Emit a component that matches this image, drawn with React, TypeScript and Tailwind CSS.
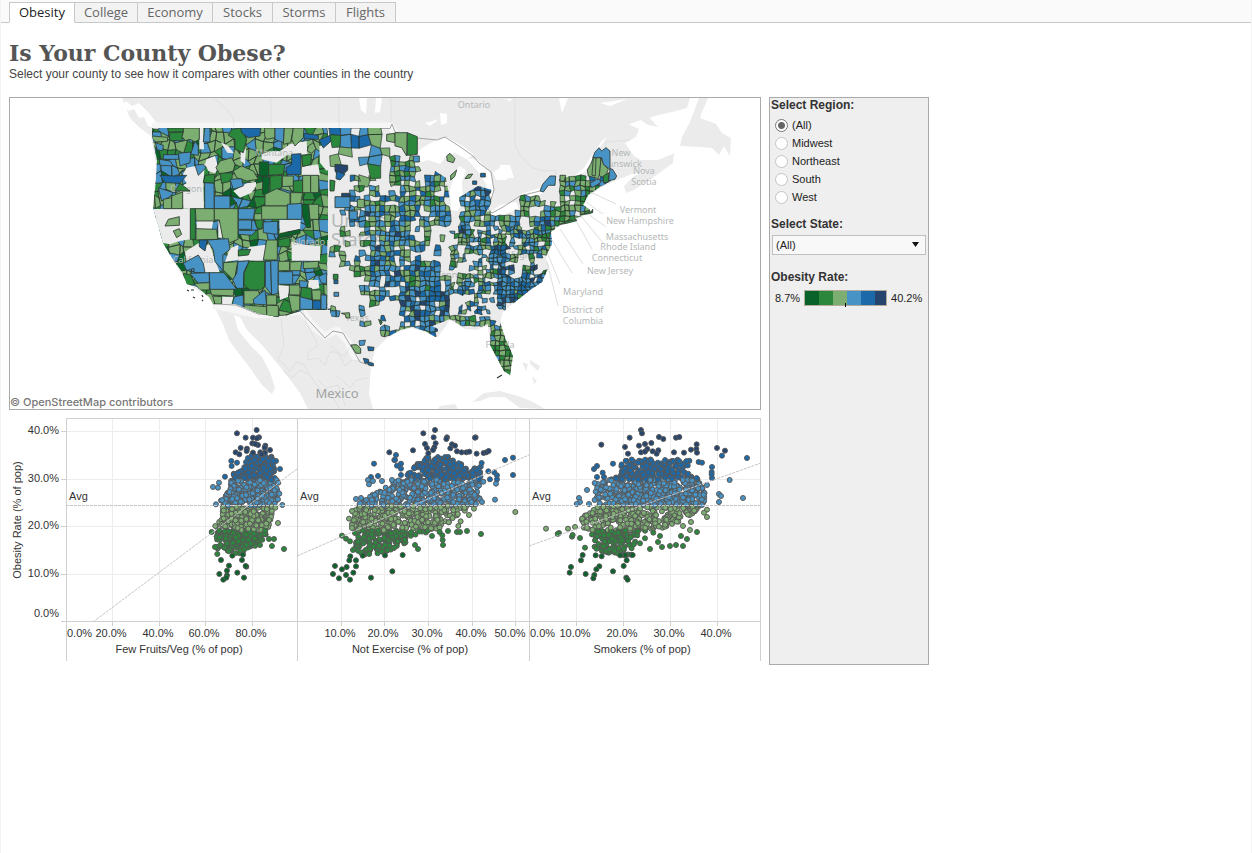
import React, { useState } from "react";

type Tone = "X" | "D" | "G" | "B" | "M" | "N" | "W";

const TONES: Record<Tone, string> = {
  X: "#09622a",
  D: "#2a873b",
  G: "#7bae70",
  B: "#4893c5",
  M: "#1c69a9",
  N: "#26456e",
  W: "#ebebeb",
};

const TABS = [
  { name: "Obesity", width: "w-[66px]" },
  { name: "College", width: "w-[64px]" },
  { name: "Economy", width: "w-[76px]" },
  { name: "Stocks", width: "w-[61px]" },
  { name: "Storms", width: "w-[64px]" },
  { name: "Flights", width: "w-[61px]" },
];

const REGIONS = ["(All)", "Midwest", "Northeast", "South", "West"];

/* ---------- deterministic noise ---------- */

function noise(a: number, b: number, c: number) {
  let h = (a * 374761393 + b * 668265263 + c * 2147483647) | 0;
  h = Math.imul(h ^ (h >>> 13), 1274126177);
  h = Math.imul(h ^ (h >>> 15), 2246822519);
  return ((h ^ (h >>> 16)) >>> 0) / 4294967296;
}

/* ---------- county mosaic ---------- */

const EAST_ROWS = [
  "ddddd",
  "ddddd",
  "dd.dddm",
  "d..dd.Gmg.b",
  "...dd.GMm.bb",
  "..mdmsGMMMMm...........GGGBB",
  "..mmM.mMMMMM.BBB.......GGGG",
  "..mmMMMMMMMM.BBB...GGgmGGG",
  ".bmBMMMMMmMM.MBB..mG.BGGGG",
  ".dBMMMMMmBmBmMbMmgBmMBMGGg",
  ".g.mMMBMbg.gMBmmsmBBMMG",
  ".g.gmMBBMm.gMMmMmmBBMGBB",
  "gm.mBMBMsmb.MMMMNNmmmMb",
  ".gbmBMmMmmmsMMmmBBMmmms",
  "..mGBBBMBBB.mmmmMBBMBmb",
  "...mBBBMMBBMmMmMMBBBBNmg",
  "...mmmbBBMNBmBmMmBBNBBb",
  ".b..GmbBBNNBsmmmbBNGB",
  "b..s...BBbNBsbbbsbB",
  "...m.b.bBBBBgGGgbbBb",
  "...b.GbMBBNb...gGG",
  "...b....BB......GGG",
  "................GGG",
  "................GGG",
  "................GGG",
];

const MIX: Record<string, [number, string]> = {
  d: [0.72, "BBBBGGGDM"],
  m: [0.48, "BBBGGGDM"],
  M: [0.87, "BBBGGGDMMBG"],
  b: [0.48, "BBBMMG"],
  B: [0.92, "BBBBMMMGBN"],
  N: [0.95, "MMMNBB"],
  g: [0.5, "GGGDB"],
  G: [0.95, "GGGGDDB"],
  s: [0.2, "BG"],
};

type Layers = Record<string, string>;

function addCell(out: Layers, tone: string, i: number, j: number, s: number, seed: number, wobble: number) {
  const at = (a: number, b: number) =>
    `${(a * s + (noise(a, b, seed) - 0.5) * wobble).toFixed(1)} ${(b * s + (noise(a, b, seed + 1) - 0.5) * wobble).toFixed(1)}`;
  out[tone] = (out[tone] ?? "") + `M${at(i, j)}L${at(i + 1, j)}L${at(i + 1, j + 1)}L${at(i, j + 1)}Z`;
}

const isSmallCountyArea = (x: number, y: number) => x >= 120 && y >= 100 && y < 190;

function eastCounties(): Layers {
  const out: Layers = {};
  EAST_ROWS.forEach((row, r) => {
    [...row].forEach((ch, c) => {
      if (ch === "." || isSmallCountyArea(c * 10, r * 10)) return;
      const [fill, tones] = MIX[ch];
      const n = ch === "d" ? 1 : 2;
      const s = 10 / n;
      for (let a = 0; a < n; a++)
        for (let b = 0; b < n; b++) {
          const i = c * n + a;
          const j = r * n + b;
          if (noise(i, j, 5) > fill) continue;
          addCell(out, tones[Math.floor(noise(i, j, 9) * tones.length)], i, j, s, 31, s * 0.5);
        }
    });
  });
  return out;
}

function smallCounties(): Layers {
  const out: Layers = {};
  const s = 4;
  for (let i = 30; i < 66; i++)
    for (let j = 25; j < 48; j++) {
      const x = i * s + s / 2;
      const y = j * s + s / 2;
      const ch = EAST_ROWS[Math.floor(y / 10)]?.[Math.floor(x / 10)] ?? ".";
      if (ch === "." || !isSmallCountyArea(x, y)) continue;
      const [fill, tones] = MIX[ch];
      const hole = noise(Math.floor(i / 2), Math.floor(j / 2), 41) < 0.12;
      if (hole || noise(i, j, 15) > fill) continue;
      addCell(out, tones[Math.floor(noise(i, j, 19) * tones.length)], i, j, s, 51, s * 0.7);
    }
  return out;
}

function westCounties(): Layers {
  const out: Layers = {};
  const tones = "GGGGGGDDDBBBX";
  for (let i = 0; i < 23; i++)
    for (let j = 0; j < 24; j++)
      addCell(out, tones[Math.floor(noise(i, j, 77) * tones.length)], i, j, 8, 12, 7);
  return out;
}

type Shape = [Tone, string];

const NORTHWEST: Shape[] = [
  ["W", "238,96 250,96 252,160 238,160"],
  ["W", "190,232 200,215 255,205 250,260 252,338 190,338 188,290 165,280 200,262 190,245"],
  ["W", "100,339 211,339 211,430 180,435 150,445 125,440 105,400"],
  ["W", "425,175 450,165 480,165 510,145 560,135 562,175 500,178 470,200 425,190"],
  ["W", "545,212 595,205 600,238 545,238"],
  ["W", "478,372 542,372 540,400 480,410"],
  ["W", "260,190 285,180 295,215 285,232 265,225 255,205"],
  ["W", "340,285 380,262 408,258 408,270 395,290 360,305"],
  ["W", "362,150 378,160 375,205 362,195"],
  ["W", "302,138 325,150 342,172 322,170"],
  ["W", "598,150 640,140 650,200 620,225 600,200"],
  ["G", "145,370 178,362 178,388 135,390"],
  ["G", "160,405 178,398 185,415 170,425"],
  ["D", "143,96 190,96 190,108 145,108"],
  ["D", "148,110 190,108 186,124 190,134 150,134"],
  ["G", "190,96 238,96 238,130 225,138 210,130 196,134 186,122 190,108"],
  ["G", "97,120 143,124 142,136 108,138 98,130"],
  ["B", "106,140 130,148 128,164 112,162"],
  ["B", "175,172 212,168 210,200 180,210"],
  ["B", "225,135 235,150 235,178 212,175"],
  ["B", "130,176 176,176 176,190 130,190"],
  ["B", "118,190 150,195 160,210 120,208"],
  ["M", "120,238 165,240 200,238 180,262 135,260"],
  ["B", "225,207 250,205 258,215 235,238"],
  ["B", "254,96 270,96 270,138 250,138"],
  ["D", "165,285 180,262 210,285"],
  ["B", "115,275 160,290 150,302 125,315"],
  ["G", "130,310 155,305 155,338 130,338"],
  ["G", "155,300 188,288 188,338 155,338"],
  ["D", "335,100 362,96 380,130 370,170 345,160 345,130 325,118"],
  ["M", "362,96 422,96 420,120 385,125 365,110"],
  ["G", "434,96 465,96 465,125 440,130 434,120"],
  ["B", "465,96 493,96 490,140 465,130"],
  ["G", "493,96 520,96 512,140 490,145"],
  ["G", "520,96 552,96 550,125 525,150 515,130"],
  ["M", "552,112 595,118 595,130 552,128"],
  ["M", "597,132 645,112 645,125 610,156"],
  ["G", "565,150 580,140 588,158 575,172 562,165"],
  ["G", "300,195 335,185 345,205 340,225 300,235 288,215"],
  ["G", "340,225 365,210 400,225 415,250 380,255 350,245"],
  ["D", "300,232 338,230 335,255 305,262"],
  ["D", "255,238 285,235 282,262 250,260"],
  ["M", "515,175 543,173 543,236 500,235 498,215 515,205"],
  ["D", "545,178 575,175 572,205 548,212"],
  ["X", "418,198 446,198 446,240 418,240"],
  ["D", "446,205 495,205 490,235 446,238"],
  ["X", "428,240 450,245 445,295 428,295"],
  ["D", "450,240 487,238 485,275 450,290"],
  ["G", "487,240 520,240 520,270 487,272"],
  ["D", "520,255 548,252 548,290 520,288"],
  ["G", "548,238 572,238 572,290 548,290"],
  ["G", "572,238 596,238 596,290 572,290"],
  ["G", "435,295 470,278 510,292 510,330 435,330"],
  ["G", "512,290 548,290 542,325 512,325"],
  ["G", "425,330 502,330 502,370 425,370"],
  ["B", "502,325 548,322 545,370 502,370"],
  ["X", "545,325 566,325 572,395 560,395 548,360"],
  ["G", "566,325 596,325 596,370 570,370"],
  ["B", "330,250 365,248 370,270 340,280"],
  ["B", "254,260 282,262 283,338 254,338"],
  ["B", "283,300 330,300 330,338 283,338"],
  ["D", "211,338 226,338 226,430 211,430"],
  ["G", "226,338 283,338 283,375 228,375"],
  ["W", "230,375 280,375 275,400 230,398"],
  ["G", "228,398 290,400 293,430 228,432"],
  ["G", "283,338 354,338 354,430 330,440 308,425 298,372 283,372"],
  ["W", "295,372 303,390 308,425 295,425"],
  ["B", "355,338 405,338 400,370 355,370"],
  ["B", "355,372 395,372 395,400 355,400"],
  ["B", "355,403 410,403 395,418 355,415"],
  ["D", "405,372 430,372 425,400 410,395"],
  ["B", "430,378 473,376 473,415 430,410"],
  ["X", "475,415 540,400 540,412 480,425"],
];

const SOUTHWEST: Shape[] = [
  ["W", "195,35 235,10 270,15 285,60 300,98 255,98 240,50 200,65"],
  ["W", "330,25 355,15 355,60 315,65"],
  ["W", "390,20 470,10 430,62 355,62 355,50"],
  ["W", "515,5 560,15 600,18 600,62 515,62"],
  ["W", "565,120 595,120 598,145 565,150"],
  ["W", "475,135 508,138 505,170 480,180"],
  ["W", "305,170 340,170 335,192 305,192"],
  ["W", "622,0 640,0 640,270 622,270"],
  ["D", "355,30 392,28 385,45 355,48"],
  ["M", "238,0 262,0 255,33 238,20"],
  ["B", "262,0 325,-4 330,28 308,45 310,92 285,65 280,30"],
  ["B", "190,70 235,45 250,70 255,98 222,98 222,85 200,92"],
  ["B", "210,100 268,98 268,128 235,130"],
  ["B", "268,98 312,98 350,148 270,150"],
  ["D", "190,100 212,105 225,135 195,135"],
  ["G", "222,130 268,128 268,150 240,150"],
  ["G", "310,68 353,65 345,110 338,118 310,90"],
  ["B", "354,65 388,62 372,95 370,145 350,145 338,120 350,100"],
  ["D", "388,64 434,64 434,140 420,150 390,150 372,135 372,100"],
  ["B", "436,64 452,64 455,165 436,140"],
  ["B", "452,62 475,62 474,160 455,165"],
  ["G", "270,148 342,148 340,168 275,165"],
  ["G", "278,168 305,170 305,192 285,192"],
  ["B", "343,170 370,165 370,205 336,195"],
  ["G", "372,152 415,152 420,168 400,192 372,192"],
  ["B", "400,178 435,150 440,195 402,192"],
  ["G", "372,195 440,200 440,228 372,208"],
  ["G", "440,195 475,197 475,230 440,228"],
  ["G", "440,165 470,165 470,195 440,195"],
  ["G", "440,0 472,0 472,60 430,60"],
  ["D", "475,0 510,-8 510,20 475,20"],
  ["G", "475,64 510,64 508,92 475,92"],
  ["G", "510,66 545,64 542,92 510,92"],
  ["G", "550,66 596,64 594,84 550,86"],
  ["B", "475,95 518,95 518,133 475,133"],
  ["G", "508,135 540,135 540,165 508,165"],
  ["B", "538,122 565,124 560,143 540,142"],
  ["D", "545,142 575,145 575,178 540,175"],
  ["G", "505,165 540,168 540,210 515,215"],
  ["B", "540,170 578,180 578,208 540,208"],
  ["G", "575,150 603,150 603,180 578,180"],
  ["M", "578,182 603,182 603,208 578,208"],
  ["B", "603,165 620,165 620,208 603,208"],
  ["B", "596,110 620,98 620,130 605,130"],
  ["D", "640,103 654,103 654,118 640,118"],
  ["M", "642,120 654,120 654,131 642,131"],
  ["B", "642,157 656,157 656,169 642,169"],
  ["B", "625,207 638,207 638,218 625,218"],
];

const MIDWEST: Shape[] = [
  ["G", "170,115 195,112 195,140 170,135"],
  ["G", "195,110 232,110 230,180 215,155 195,150"],
  ["D", "232,110 262,122 262,175 232,178"],
  ["B", "250,180 268,180 268,198 250,198"],
  ["D", "0,252 15,255 12,285 0,285"],
  ["N", "15,205 53,208 53,222 40,235 25,240 15,225"],
  ["M", "20,225 45,235 30,252 18,248"],
  ["B", "15,302 60,302 60,335 15,335"],
  ["N", "35,292 60,292 60,302 35,302"],
  ["G", "82,310 103,310 103,335 82,335"],
  ["B", "58,345 82,345 82,370 58,370"],
  ["G", "350,180 360,172 375,188 370,200 352,195"],
  ["G", "362,238 380,222 374,242 362,252"],
  ["M", "452,232 466,232 466,243 452,243"],
  ["M", "428,255 440,255 440,265 428,265"],
  ["G", "405,248 414,236 428,234 420,246"],
];

const SOUTH: Shape[] = [
  ["G", "62,315 80,314 92,325 92,340 78,340"],
  ["M", "113,320 132,322 130,332 115,332"],
  ["M", "100,355 115,358 117,368 105,370"],
  ["M", "112,366 130,370 130,378 116,375"],
  ["G", "34,220 58,218 60,234 48,234 46,224"],
  ["D", "146,238 157,246 152,255"],
];

const NORTHEAST: Shape[] = [
  ["G", "262,222 272,205 280,185 303,185 300,230 295,248 265,240"],
  ["G", "303,185 312,205 325,220 315,245 298,240"],
  ["G", "280,185 288,185 286,240 276,238"],
  ["B", "297,155 305,165 318,155 330,165 330,220 310,205 305,185 278,185 285,168"],
  ["B", "330,218 338,220 350,240 345,250 326,254"],
  ["D", "310,240 326,230 325,258 310,260"],
  ["B", "270,262 290,250 302,252 300,262 275,275"],
  ["B", "120,285 128,265 150,240 167,240 165,268 145,268 130,288"],
  ["G", "180,238 197,238 193,255 180,255"],
  ["D", "240,355 262,352 275,346 278,340 278,350 262,354"],
  ["D", "180,385 200,376 228,370 230,374 200,382"],
];

const US =
  "152,135 157,160 156,180 153,208 158,225 163,243 172,258 182,272 187,284 197,287 209,297 213,304 236,304 258,313 277,317 285,316 303,310 330,310 335,338 345,342 352,355 360,363 373,368 375,350 386,338 400,330 412,327 425,331 437,338 438,329 432,326 450,319 465,328 476,329 488,324 490,345 497,358 504,371 510,375 513,356 505,338 500,322 503,312 515,302 530,290 542,282 549,266 545,258 552,244 551,232 560,225 577,218 592,211 583,205 588,195 600,187 616,178 611,168 608,149 598,147 590,160 587,172 575,175 547,182 540,192 521,195 500,210 486,212 491,204 492,190 478,186 455,200 452,212 446,178 418,160 417,138 392,128 152,128";

const isGap = ([tone]: Shape) => tone === "W";
const isCounty = ([tone]: Shape) => tone !== "W";

function MapShapes({ shapes, transform }: { shapes: Shape[]; transform: string }) {
  return (
    <g transform={transform} stroke="#2f3b33" strokeWidth="2.6" strokeLinejoin="round">
      {shapes.map(([tone, points], i) => (
        <polygon key={i} points={points} fill={TONES[tone]} stroke={tone === "W" ? "none" : undefined} />
      ))}
    </g>
  );
}

function MosaicLayer({ layers }: { layers: Layers }) {
  return (
    <g stroke="#26352c" strokeWidth="0.7" strokeLinejoin="round">
      {Object.entries(layers).map(([tone, d]) => (
        <path key={tone} d={d} fill={TONES[tone as Tone]} />
      ))}
    </g>
  );
}

const OUTER_PLACES: [string, number, number][] = [
  ["Ontario", 474, 108],
  ["New", 621, 156],
  ["Brunswick", 620, 167],
  ["Nova", 644, 174],
  ["Scotia", 644, 185],
  ["Vermont", 638, 213],
  ["New Hampshire", 640, 224],
  ["Massachusetts", 637, 240],
  ["Rhode Island", 628, 250],
  ["Connecticut", 617, 261],
  ["New Jersey", 610, 274],
  ["Maryland", 583, 295],
  ["District of", 583, 313],
  ["Columbia", 583, 324],
  ["Texas", 357, 321],
  ["Florida", 500, 348],
  ["Tennessee", 459, 278],
  ["Virginia", 524, 258],
];

const INNER_PLACES: [string, number, number][] = [
  ["Oregon", 186, 192],
  ["California", 193, 263],
  ["Colorado", 306, 245],
  ["Montana", 274, 156],
];

const EAST = eastCounties();
const SMALL = smallCounties();
const WEST = westCounties();

function PlaceNames({ places }: { places: [string, number, number][] }) {
  return (
    <g fill="#b4b8b8" fontSize="9" fontFamily="'Noto Sans', sans-serif" textAnchor="middle">
      {places.map(([name, x, y]) => (
        <text key={name} x={x} y={y}>
          {name}
        </text>
      ))}
    </g>
  );
}

function CountyMap() {
  return (
    <svg viewBox="10 98 750 311" className="block h-auto w-full" role="img" aria-label="Map of obesity rate by county">
      <defs>
        <clipPath id="us-outline">
          <polygon points={US} />
        </clipPath>
      </defs>
      <g fill="#ebebeb">
        <path d="M122 98L560 98L563 110L566 98L690 98L687 108L672 112L655 116L635 122L615 130L602 141L592 155L584 168L572 178L585 172L600 147L612 130L628 124L639 129L636 137L625 143L634 156L641 160L658 160L672 154L655 167L645 172L632 174L617 180L600 188L589 196L584 205L592 211L577 220L560 226L551 232L552 244L546 258L549 266L542 282L530 290L515 302L503 312L500 322L506 338L513 356L510 375L504 372L497 358L490 345L488 326L476 330L465 329L450 320L438 337L425 332L412 328L400 331L386 339L375 350L371 366L369 394L373 409L308 409L300 393L281 368L262 345L247 330L240 317L234 315L238 330L250 345L262 357L270 372L275 388L272 394L262 385L250 368L240 355L229 340L222 322L213 304L209 297L187 284L172 258L153 208L156 165L151 136L140 128L130 118Z" />
        <path d="M699 98L708 98L702 112L700 118L716 124L722 133L731 138L730 156L724 146L719 155L712 148L700 147L680 146L682 137L690 122Z" />
        <path d="M624 186L634 176L650 170L660 162L674 153L673 163L655 176L634 190L626 193Z" />
        <path d="M638 118L650 118L658 127L648 125Z" />
        <path d="M472 402L484 393L500 391L518 396L533 402L545 409L520 408L505 397L490 397L480 401Z" />
        <path d="M522 362L528 364L526 371ZM532 376L537 381L534 384ZM530 360L540 366L538 371L530 364ZM440 406L455 404L458 409L438 409Z" />
      </g>
      <g fill="#fff">
        <path d="M122 106L129 111L134 109L139 118L144 117L148 126L154 128L163 134L164 128L156 122L148 112L139 103L132 106L126 101Z" />
        <path d="M359 98L367 98L366 114L361 110ZM376 98L382 98L380 112L375 113ZM440 113L447 114L447 123L441 125ZM439 119L425 123L430 126Z" />
        <path d="M412 158L422 148L436 140L446 137L463 146L474 155L466 159L455 153L446 157L440 164L428 160L418 163Z" />
        <path d="M451 210L450 190L454 176L459 166L466 170L462 182L463 200L458 211Z" />
        <path d="M466 158L478 160L491 173L494 185L493 197L488 197L486 184L480 174L474 167Z" />
        <path d="M493 172L505 165L512 175L506 180L496 180ZM489 213L500 205L516 202L519 209L505 214L495 219Z" />
        <path d="M521 194L540 188L543 193L530 199L520 199ZM500 165L510 165L514 178L500 178Z" />
        <path d="M559 99L568 98L562 113ZM627 99L600 103L610 106ZM505 99L512 99L510 101Z" />
      </g>
      <g fill="none" stroke="#f6f6f6" strokeWidth="7" strokeLinejoin="round">
        <path d="M152 126L391 126L395 133M213 305L258 315L302 311L314 327L325 336L337 330L348 342L356 360" />
      </g>
      <g fill="none" stroke="#d9dbdb" strokeWidth="0.7">
        <path d="M213 98L226 108L233 118L234 127M271 98V127M339 98V127M391 98V123M515 98V145L521 157L533 168L545 171L556 170V175M606 152V142L630 140M155 208H270M319 194V310M327 247H400M330 207H380M345 240L400 242M400 210V290M281 318L284 345L278 360L286 366L290 372L296 362L303 364L310 375M303 310L306 322L318 345L308 352L308 360L318 358L325 365L330 352L335 352L344 356L350 348M330 345L338 352L345 366L352 360L360 362M335 375L342 380L350 388L356 380L368 378M318 380L326 388L338 385L342 396L345 405M283 370L292 378L300 370L310 375L316 384L325 395L334 399L340 409" />
      </g>
      <g fill="none" stroke="#d2d4d4" strokeWidth="0.8">
        <path d="M588 191L616 204M586 202L603 214M584 211L606 227M581 216L603 243M575 219L592 249M560 229L583 264M552 240L572 273M547 252L560 284M547 262L558 306" />
      </g>
      <g fill="none" stroke="#a3a6a6" strokeWidth="1">
        <path d="M318 128.500H390L392 124L395 132L417 138L437 140L445 137L462 148L473 156L479 163L491 172L494 190L488 209L492 213L503 207L520 196L540 191M160 128.500H318M213 304L236 305L258 314L278 316L300 311L312 324L325 338L333 331L343 333L352 348L360 362L372 366" />
      </g>
      <PlaceNames places={OUTER_PLACES} />
      <g fill="#b4b8b8" fontSize="18" fontFamily="'Noto Sans', sans-serif">
        <text x="331" y="227">United</text>
        <text x="331" y="246">States</text>
      </g>
      <g clipPath="url(#us-outline)">
        <svg x="149" y="128" width="179" height="189" viewBox="4 2 179 189">
          <MosaicLayer layers={WEST} />
        </svg>
        <MapShapes shapes={NORTHWEST.filter(isGap)} transform="translate(120 96) scale(0.3333)" />
        <MapShapes shapes={SOUTHWEST.filter(isGap)} transform="translate(120 240) scale(0.3333)" />
      </g>
      <PlaceNames places={INNER_PLACES} />
      <g clipPath="url(#us-outline)">
        <MapShapes shapes={NORTHWEST.filter(isCounty)} transform="translate(120 96) scale(0.3333)" />
        <MapShapes shapes={SOUTHWEST.filter(isCounty)} transform="translate(120 240) scale(0.3333)" />
        <g transform="translate(330 126)">
          <MosaicLayer layers={EAST} />
          <MosaicLayer layers={SMALL} />
        </g>
      </g>
      <MapShapes shapes={MIDWEST} transform="translate(330 96) scale(0.3333)" />
      <MapShapes shapes={SOUTH} transform="translate(330 240) scale(0.3333)" />
      <MapShapes shapes={NORTHEAST} transform="translate(500 96) scale(0.3333)" />
      <path d="M187 290L189 291M191 290L194 290M193 297L195 298M202 295L203 297M202 300L203 301M497 378L502 375" stroke="#26352c" strokeWidth="1.2" fill="none" />
      <text x="337" y="398" textAnchor="middle" fill="#a2a4a4" fontSize="13" fontFamily="'Noto Sans', sans-serif">
        Mexico
      </text>
      <text x="10" y="406" fill="#777" fontSize="11" fontWeight="500" fontFamily="Inter, 'Noto Sans', sans-serif">
        © OpenStreetMap contributors
      </text>
    </svg>
  );
}

/* ---------- scatter plots ---------- */

type Pt = [number, number];

interface Panel {
  label: string;
  left: number;
  origin: number;
  count: number;
  ticks: [string, number][];
  trend: [number, number, number, number];
  body: Pt[];
  extra: Pt[];
}

const PANELS: Panel[] = [
  {
    label: "Few Fruits/Veg (% of pop)",
    left: 66,
    origin: 0,
    count: 820,
    ticks: [["20.0%", 112], ["40.0%", 159], ["60.0%", 205], ["80.0%", 252]],
    trend: [93, 622, 297, 469],
    body: [[738,140],[765,132],[815,140],[825,160],[826,190],[832,230],[832,275],[822,295],[810,340],[800,370],[780,400],[755,420],[720,435],[690,425],[650,415],[650,385],[648,350],[668,320],[668,290],[655,275],[690,240],[690,210],[705,185],[730,180]],
    extra: [[711,70],[770,60],[737,83],[759,83],[777,82],[771,85],[757,100],[774,105],[766,102],[796,107],[794,113],[722,114],[741,116],[707,127],[718,133],[740,123],[759,128],[781,127],[795,128],[810,120],[785,133],[694,153],[711,158],[695,168],[675,200],[657,218],[639,231],[654,233],[828,153],[820,152],[840,177],[830,210],[835,218],[838,251],[834,268],[847,285],[826,293],[834,339],[635,366],[646,348],[822,387],[807,387],[816,408],[852,417],[780,405],[663,450],[652,432],[726,450],[697,437],[729,434],[687,467],[739,470],[737,468],[681,482],[658,492],[712,488],[681,496],[670,509],[679,503],[732,503],[645,411],[648,283]],
  },
  {
    label: "Not Exercise (% of pop)",
    left: 297,
    origin: 295,
    count: 980,
    ticks: [["10.0%", 341], ["20.0%", 384], ["30.0%", 428], ["40.0%", 472], ["50.0%", 511]],
    trend: [297, 556, 529, 455],
    body: [[350,175],[395,140],[460,140],[490,155],[530,180],[565,150],[555,190],[560,215],[545,240],[560,260],[545,280],[530,295],[500,315],[470,335],[430,355],[400,370],[350,375],[330,400],[290,420],[250,432],[200,435],[175,420],[185,390],[190,365],[170,350],[170,300],[195,280],[230,255],[262,240],[290,215],[330,205]],
    extra: [[385,70],[420,60],[416,82],[456,82],[454,87],[542,82],[540,83],[390,102],[422,100],[471,103],[480,107],[396,114],[418,112],[414,120],[354,121],[400,130],[283,127],[466,115],[486,124],[500,127],[514,127],[523,125],[545,131],[566,129],[574,127],[581,123],[303,135],[298,150],[300,150],[237,161],[306,167],[318,161],[318,176],[654,143],[630,150],[654,195],[318,195],[249,198],[228,201],[219,210],[234,213],[222,223],[261,213],[291,210],[580,184],[598,187],[606,196],[606,208],[585,208],[603,221],[565,215],[600,269],[183,267],[198,264],[195,280],[561,276],[543,282],[661,306],[537,296],[522,315],[171,303],[162,326],[171,345],[171,354],[490,348],[497,334],[486,366],[495,366],[516,363],[459,363],[434,366],[442,376],[443,390],[444,405],[558,372],[411,378],[369,417],[323,435],[360,405],[180,369],[141,377],[153,386],[165,394],[174,420],[183,451],[166,439],[163,451],[120,468],[141,478],[155,471],[183,469],[114,492],[132,505],[153,495],[175,488],[165,509],[228,503],[292,484],[270,436],[203,437]],
  },
  {
    label: "Smokers (% of pop)",
    left: 529,
    origin: 525,
    count: 980,
    ticks: [["10.0%", 576], ["20.0%", 623], ["30.0%", 670], ["40.0%", 717]],
    trend: [529, 546, 761, 463],
    body: [[285,148],[500,148],[500,190],[530,215],[540,250],[540,275],[515,300],[470,335],[400,360],[340,365],[330,410],[320,435],[290,438],[250,428],[205,418],[205,385],[195,360],[155,355],[175,320],[225,285],[210,260],[215,220],[270,205],[290,180]],
    extra: [[348,60],[351,70],[314,83],[402,81],[415,87],[453,83],[463,81],[229,104],[300,111],[342,107],[360,102],[379,99],[367,117],[348,127],[360,125],[383,124],[400,121],[395,131],[309,131],[447,127],[477,128],[498,119],[515,103],[514,117],[516,128],[576,114],[600,122],[591,137],[666,144],[264,161],[207,177],[216,168],[233,188],[216,201],[237,201],[209,219],[186,240],[162,264],[165,276],[155,282],[192,282],[209,270],[521,156],[531,158],[561,171],[560,186],[561,204],[560,193],[614,210],[582,252],[588,258],[582,276],[654,264],[546,225],[546,299],[546,321],[531,285],[537,308],[498,336],[474,348],[495,360],[516,366],[468,378],[486,387],[474,408],[453,405],[435,408],[411,411],[375,417],[405,378],[399,396],[360,385],[345,400],[385,368],[63,356],[102,369],[98,372],[129,356],[150,351],[141,380],[143,375],[165,384],[180,413],[173,435],[168,451],[212,436],[230,439],[323,435],[305,451],[296,468],[138,471],[134,488],[182,492],[223,469],[214,478],[208,495],[205,505],[264,484],[304,503],[308,509]],
  },
];

function inside([x, y]: Pt, poly: Pt[]) {
  let hit = false;
  for (let i = 0, j = poly.length - 1; i < poly.length; j = i++) {
    const [xi, yi] = poly[i];
    const [xj, yj] = poly[j];
    if (yi > y !== yj > y && x < ((xj - xi) * (y - yi)) / (yj - yi) + xi) hit = !hit;
  }
  return hit;
}

function toneFor(y: number): Tone {
  if (y < 134) return "N";
  if (y < 209) return "M";
  if (y < 287) return "B";
  if (y < 361) return "G";
  if (y < 434) return "D";
  return "X";
}

function scatter(panel: Panel, seed: number): Pt[] {
  const xs = panel.body.map((p) => p[0]);
  const x0 = Math.min(...xs);
  const x1 = Math.max(...xs);
  const pts: Pt[] = [];
  for (let i = 0; pts.length < panel.count && i < 9000; i++) {
    const p: Pt = [x0 + noise(i, 3, seed) * (x1 - x0), 132 + noise(i, 8, seed + 4) * 308];
    if (inside(p, panel.body)) pts.push(p);
  }
  return [...pts, ...panel.extra];
}

const CLOUDS = PANELS.map((p, i) => scatter(p, 100 + i * 17));

const Y_TICKS: [string, number, number][] = [
  ["40.0%", 431, 434],
  ["30.0%", 479, 482],
  ["20.0%", 526, 529],
  ["10.0%", 574, 577],
  ["0.0%", 622, 617],
];

function ScatterPlots() {
  return (
    <svg viewBox="9 418 752 243" className="mt-2 block h-auto w-full" role="img" aria-label="Obesity rate scatter plots">
      <g shapeRendering="crispEdges" fill="none">
        <g stroke="#ececec">
          {Y_TICKS.slice(0, 4).map(([t, y]) => (
            <path key={t} d={`M66 ${y + 0.5}H761`} />
          ))}
          {PANELS.flatMap((p) => p.ticks.map(([t, x]) => <path key={p.left + t} d={`M${(t === "50.0%" ? 515 : x) + 0.5} 419V622`} />))}
        </g>
        <g stroke="#d0d0d0">
          <path d="M66 418.500H761M61 621.500H761M66.500 418V661M297.500 418V661M529.500 418V661M760.500 418V661" />
          {Y_TICKS.slice(0, 4).map(([t, y]) => (
            <path key={t} d={`M61 ${y + 0.5}H66`} />
          ))}
          {PANELS.flatMap((p) => p.ticks.map(([t, x]) => <path key={p.left + t} d={`M${(t === "50.0%" ? 515 : x) + 0.5} 622V626`} />))}
        </g>
      </g>
      {CLOUDS.map((cloud, i) => (
        <g key={i} transform={`translate(${PANELS[i].origin} 410) scale(0.3333)`} stroke="#575757" strokeWidth="3">
          {cloud.map(([x, y], k) => (
            <circle key={k} cx={x.toFixed(1)} cy={y.toFixed(1)} r="7.5" fill={TONES[toneFor(y)]} />
          ))}
        </g>
      ))}
      <g fill="none" stroke="#c4c4c4">
        <path d="M66 505.500H761" strokeDasharray="3 1" />
        {PANELS.map((p) => (
          <path key={p.left} d={`M${p.trend[0]} ${p.trend[1]}L${p.trend[2]} ${p.trend[3]}`} strokeDasharray="3 1" />
        ))}
      </g>
      <g fill="#333" fontSize="11" fontFamily="'Liberation Sans', Arial, sans-serif">
        <g textAnchor="end">
          {Y_TICKS.map(([t, , y]) => (
            <text key={t} x="59" y={y}>
              {t}
            </text>
          ))}
        </g>
        <text x="67" y="637">0.0%</text>
        <text x="530" y="637">0.0%</text>
        {PANELS.map((p) => (
          <g key={p.left}>
            <text x={p.left + 3} y="500">
              Avg
            </text>
            <g textAnchor="middle">
              {p.ticks.map(([t, x]) => (
                <text key={t} x={x - 1} y="637">
                  {t}
                </text>
              ))}
              <text x={p.left + 113} y="653">
                {p.label}
              </text>
            </g>
          </g>
        ))}
        <text transform="translate(21 520) rotate(-90)" textAnchor="middle">
          Obesity Rate (% of pop)
        </text>
      </g>
    </svg>
  );
}

/* ---------- filters ---------- */

function Filters() {
  const [region, setRegion] = useState("(All)");
  return (
    <aside className="w-40 shrink-0 border border-[#aaa] bg-[#efefef] px-px text-[11px] text-[#222]">
      <fieldset>
        <legend className="text-xs leading-[14px] font-bold text-[#333]">Select Region:</legend>
        <div className="mt-1 flex flex-col">
          {REGIONS.map((name) => (
            <label key={name} className="flex h-[18px] items-center gap-1 pl-1">
              <input
                type="radio"
                name="region"
                checked={region === name}
                onChange={() => setRegion(name)}
                className="size-[13px] appearance-none rounded-full border border-[#c4c4c4] bg-white checked:border-[#777] checked:bg-[radial-gradient(circle,#666_0_3px,#fff_4px)]"
              />
              {name}
            </label>
          ))}
        </div>
      </fieldset>
      <label htmlFor="state" className="mt-[11px] block text-xs leading-[14px] font-bold text-[#333]">
        Select State:
      </label>
      <div className="relative mt-1 px-px">
        <select id="state" className="block h-5 w-full appearance-none border border-[#c0c0c0] bg-[#f8f8f8] pl-[3px] text-[11px]">
          <option>(All)</option>
        </select>
        <svg viewBox="0 0 7 5" className="pointer-events-none absolute top-[7px] right-2 h-[5px] w-[7px]" aria-hidden="true">
          <path d="M0 0H7L3.500 5Z" fill="#111" />
        </svg>
      </div>
      <h2 className="mt-[15px] text-xs leading-[14px] font-bold text-[#333]">Obesity Rate:</h2>
      <div className="mt-1.5 flex items-center gap-1 pl-1">
        <span>8.7%</span>
        <div className="relative flex h-4 w-[83px] border border-[#b5ab9c]">
          <span className="flex-1 bg-[#09622a]" />
          <span className="flex-1 bg-[#2a873b]" />
          <span className="flex-1 bg-[#7bae70]" />
          <span className="flex-1 bg-[#4893c5]" />
          <span className="flex-1 bg-[#1c69a9]" />
          <span className="w-[11px] bg-[#26456e]" />
          <span className="absolute -bottom-0.5 left-10 h-1 w-px bg-black" />
        </div>
        <span>40.2%</span>
      </div>
    </aside>
  );
}

export default function App() {
  const [tab, setTab] = useState("Obesity");
  return (
    <div className="min-h-screen border-x border-[#f3f3f3] bg-white font-['Liberation_Sans',Arial,sans-serif]">
      <nav className="flex items-end border-b border-[#c8c8c8] bg-[#fafafa] pt-0.5 pl-2">
        {TABS.map(({ name, width }) => (
          <button
            key={name}
            type="button"
            onClick={() => setTab(name)}
            className={`-mr-px -mb-px h-[21px] border border-[#c8c8c8] text-center font-['Open_Sans','Noto_Sans',sans-serif] text-[13px] leading-[19px] ${width} ${
              tab === name ? "relative border-b-white bg-white text-[#222]" : "bg-[#f3f3f3] text-[#666]"
            }`}
          >
            {name}
          </button>
        ))}
      </nav>
      <main className="px-2 pt-4">
        <h1 className="pt-px font-['DejaVu_Serif','Liberation_Serif',serif] text-[22px] leading-[27px] font-bold text-[#555]">Is Your County Obese?</h1>
        <p className="text-xs leading-[14px] text-[#444]">Select your county to see how it compares with other counties in the country</p>
        <div className="mt-4 flex max-w-[920px] items-stretch gap-2">
          <div className="min-w-0 flex-1 pb-1">
            <div className="border border-[#aaa]">
              <CountyMap />
            </div>
            <ScatterPlots />
          </div>
          <Filters />
        </div>
      </main>
    </div>
  );
}
